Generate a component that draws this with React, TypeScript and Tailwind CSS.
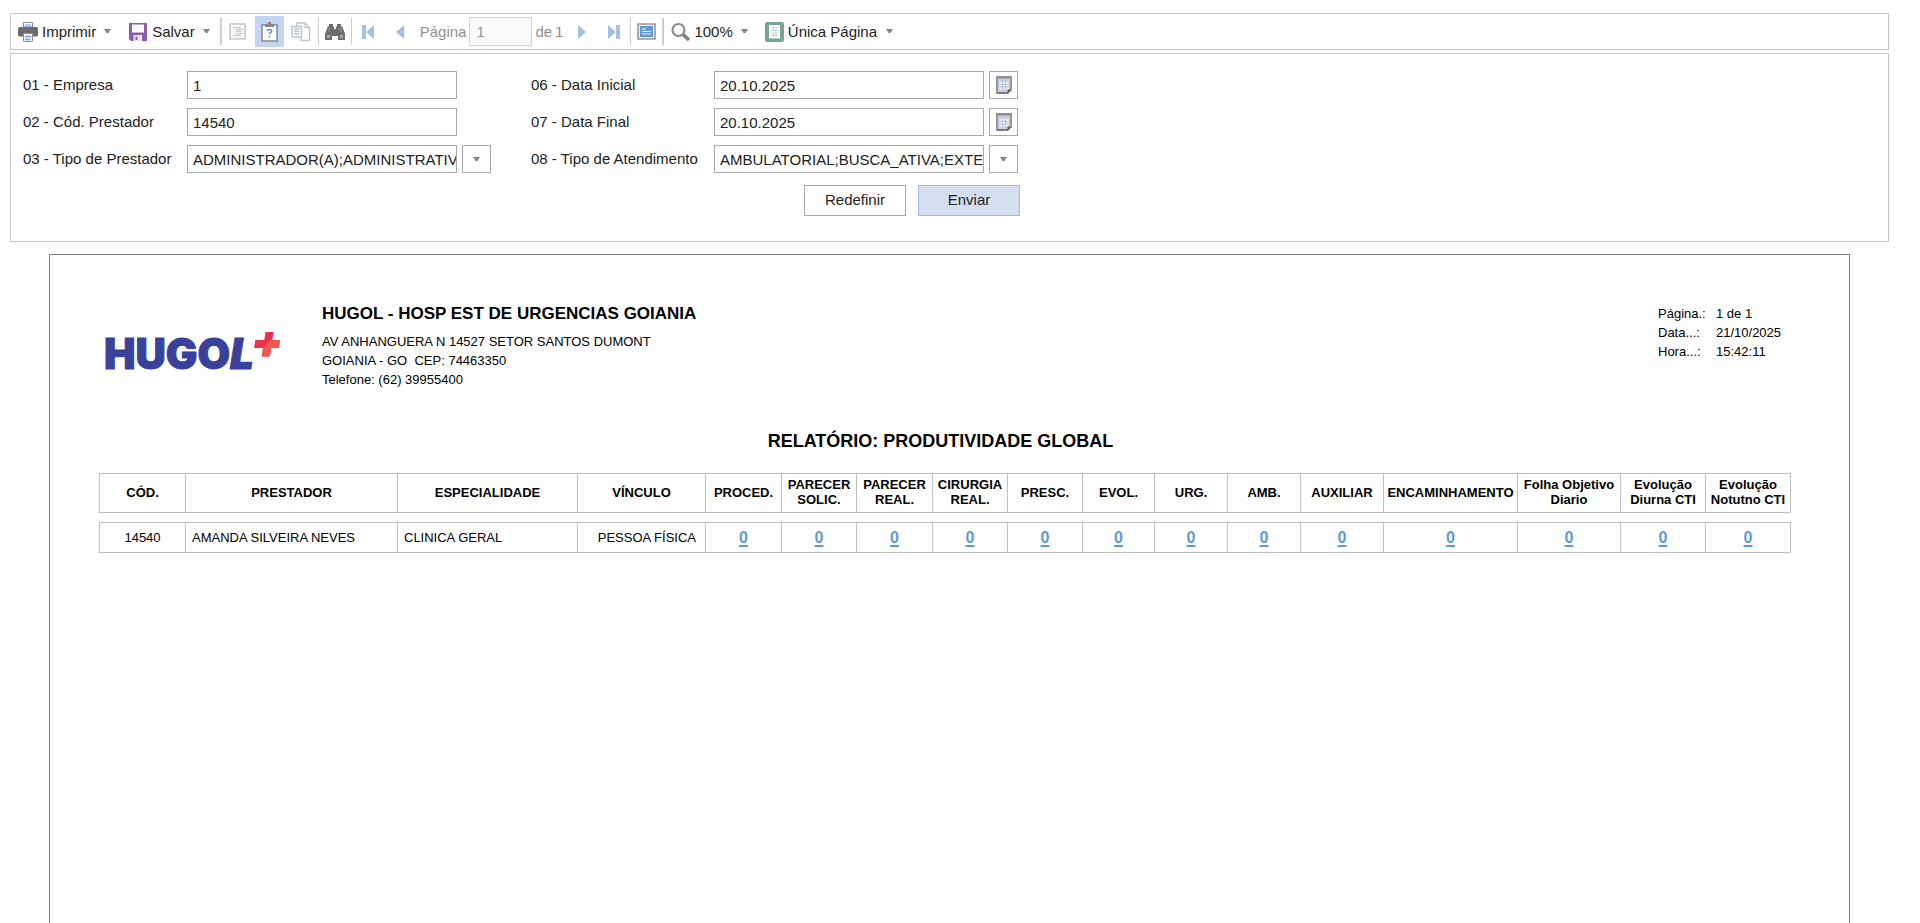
import React from "react";

const Caret = () => (
  <svg width="8" height="5" viewBox="0 0 8 5" aria-hidden="true" className="shrink-0">
    <path d="M0 0h7L4.5 4h-2z" fill="#868686" />
  </svg>
);

const PrinterIcon = () => (
  <svg width="20" height="20" viewBox="0 0 20 20" aria-hidden="true">
    <path d="M5.5 5.5v-5h9v5" fill="#fff" stroke="#8a8a8a" />
    <path d="M7 3h6" stroke="#6b9bd1" />
    <path d="M2 5h16q2 0 2 2v6q0 1.500-2 1.500H2q-2 0-2-1.500V7q0-2 2-2z" fill="#6b6b6b" />
    <path d="M5 5h10" stroke="#4f87c6" strokeWidth="1.200" />
    <path d="M5.500 11.500h9v8h-9z" fill="#eef4fb" stroke="#929292" />
    <path d="M7 14.500h6M7 17.500h5" stroke="#6ea3dc" strokeWidth="1.500" />
  </svg>
);

const SaveIcon = () => (
  <svg width="18" height="18" viewBox="0 0 18 18" aria-hidden="true">
    <path d="M0 0h18v18H2l-2-2z" fill="#8d5bb0" />
    <path d="M3 1.500h12v8H3z" fill="#fff" />
    <path d="M4.500 12h8.500v6H4.500z" fill="#efe6f5" />
    <path d="M6.500 13.500h2V17h-2z" fill="#8d5bb0" />
  </svg>
);

const TocIcon = () => (
  <svg width="17" height="17" viewBox="0 0 17 17" aria-hidden="true">
    <path d="M1 1h15v15H1z" fill="#fafafa" stroke="#c6c6c6" strokeWidth="1.600" />
    <path d="M4 4.500h8M7 6.500h7M7 8.500h5M7 10.500h7M4 12.500h8" stroke="#a5c6e8" />
  </svg>
);

const ParamsIcon = () => (
  <svg width="17" height="21" viewBox="0 0 17 21" aria-hidden="true">
    <path d="M1 4h15v16H1z" fill="#fff" stroke="#8c8c8c" strokeWidth="1.600" />
    <path d="M4 3h3V1h3v2h3v3H4z" fill="#858585" />
    <path d="M6.300 10q0-1.500 2.200-1.500t2.200 1.500q0 1-2.200 2.200v1.300M8.500 14.800v1.700" fill="none" stroke="#5b96d4" strokeWidth="1.600" />
  </svg>
);

const CopyIcon = () => (
  <svg width="20" height="20" viewBox="0 0 20 20" aria-hidden="true">
    <path d="M5.500 4V1h8.500l4.500 4.500v13h-8.500V15" fill="#fff" stroke="#c2c2c2" strokeWidth="1.400" />
    <path d="M14 1v4.500h4.500" fill="none" stroke="#c2c2c2" strokeWidth="1.200" />
    <path d="M1 4.500h9.500v10.500H1z" fill="#fff" stroke="#c2c2c2" strokeWidth="1.400" />
    <path d="M3 7h5.500M3 9.500h5.500M3 12h5.500" stroke="#a5c6e8" strokeWidth="1.300" />
  </svg>
);

const BinocularsIcon = () => (
  <svg width="20" height="18" viewBox="0 0 20 18" aria-hidden="true">
    <path d="M4 1h4v2l1 1v2h2V4l1-1V1h4v2l1.500 1 2.500 7v6h-7v-5.500h-6V17H0v-6L2.500 4 4 3z" fill="#6e6e6e" />
    <path d="M7 8h6v5H7z" fill="#6e6e6e" />
    <path d="M2 12h3v3H2zM15 12h3v3h-3z" fill="#a9a9a9" />
    <path d="M5 4.500L3.500 9M15 4.500l1.500 4.500" stroke="#a0a0a0" />
  </svg>
);

const FirstIcon = () => (
  <svg width="12" height="16" viewBox="0 0 12 16" aria-hidden="true">
    <path d="M0 1h4v14H0zM12 1v14L4 8z" fill="#a3c1df" />
  </svg>
);
const LastIcon = () => (
  <svg width="12" height="16" viewBox="0 0 12 16" aria-hidden="true">
    <path d="M8 1h4v14H8zM0 1v14l8-7z" fill="#a3c1df" />
  </svg>
);
const PrevIcon = () => (
  <svg width="8" height="16" viewBox="0 0 8 16" aria-hidden="true">
    <path d="M8 1v14L0 8z" fill="#a3c1df" />
  </svg>
);
const NextIcon = () => (
  <svg width="8" height="16" viewBox="0 0 8 16" aria-hidden="true">
    <path d="M0 1v14l8-7z" fill="#a3c1df" />
  </svg>
);

const FullScreenIcon = () => (
  <svg width="19" height="17" viewBox="0 0 19 17" aria-hidden="true">
    <path d="M1 1h17v15H1z" fill="#e9e9e9" stroke="#999" strokeWidth="1.600" />
    <path d="M3 3h13v11H3z" fill="#609bd8" />
    <path d="M5 6h4M5 8.500h9M5 11h9" stroke="#e2eefa" strokeWidth="1.200" />
  </svg>
);

const ZoomIcon = () => (
  <svg width="20" height="20" viewBox="0 0 20 20" aria-hidden="true">
    <circle cx="7.500" cy="8" r="6" fill="#fff" stroke="#8a8a8a" strokeWidth="2.200" />
    <path d="M12 12.500l6 5.500" stroke="#808080" strokeWidth="3.600" />
  </svg>
);

const SinglePageIcon = () => (
  <svg width="19" height="20" viewBox="0 0 19 20" aria-hidden="true">
    <rect width="19" height="20" rx="2" fill="#74a894" />
    <path d="M4 3h11v13.500H4z" fill="#fff" />
    <path d="M6.500 6h6M6.500 8.500h6M6.500 11h6M6.500 13.500h6" stroke="#a5c6e8" />
  </svg>
);

const CalendarIcon = () => (
  <svg width="16" height="18" viewBox="0 0 16 18" aria-hidden="true">
    <path d="M1 1h14v12.500L11.500 17H1z" fill="#c3d0e0" stroke="#9d9497" strokeWidth="2" />
    <path d="M1 1.500h14" stroke="#93888b" strokeWidth="2" />
    <path d="M3.500 6h9v7.500h-9z" fill="#eef2f7" />
    <path d="M3.500 8.500h9M3.500 11h9M6.500 6v7.500M9.500 6v7.500" stroke="#b5c3d5" />
    <path d="M1 17h11" stroke="#857a7d" strokeWidth="2" />
    <path d="M11.500 13.500H16L11.500 18z" fill="#6f6468" />
  </svg>
);

const Logo = () => (
  <svg width="190" height="60" viewBox="-4 -6 190 60" role="img" aria-label="HUGOL">
    <text x="-1" y="37" fill="#38429a" stroke="#38429a" strokeWidth="1" className="font-['Inter',sans-serif] text-[42px] font-black">
      HUGO<tspan className="italic">L</tspan>
    </text>
    <path d="M160.500 0h8l-1.200 8H175l-1.200 8h-7.700l-1.400 8.500h-8l1.400-8.500h-9l1.200-8h9z" fill="#ee2f4c" />
    <path d="M165 8h10l-1.200 8h-7.700l-1.400 8.500h-8l1.400-8.500z" fill="#f2564e" />
  </svg>
);

const Separator = ({ wide = false }: { wide?: boolean }) => (
  <span className={wide ? "h-[27px] w-0.5 shrink-0 bg-[#cfcfcf]" : "h-[27px] w-px shrink-0 bg-[#cfcfcf]"} />
);

function Toolbar() {
  return (
    <header className="flex h-[37px] items-center border border-[#c6c6c6] pl-[7px]">
      <button type="button" className="flex items-center gap-1">
        <PrinterIcon />
        <span className="pt-0.5">Imprimir</span>
        <span className="ml-1"><Caret /></span>
      </button>
      <button type="button" className="ml-[17px] flex items-center gap-[5px]">
        <SaveIcon />
        <span className="pt-0.5">Salvar</span>
        <span className="ml-[3px]"><Caret /></span>
      </button>
      <span className="w-[9px]" />
      <Separator wide />
      <button type="button" aria-label="Índice" className="ml-[7px] flex"><TocIcon /></button>
      <button type="button" aria-label="Parâmetros" className="ml-[9px] flex h-[31px] w-[29px] items-center justify-center bg-[#c2d5f2]">
        <ParamsIcon />
      </button>
      <button type="button" aria-label="Copiar" className="mx-[7px] flex"><CopyIcon /></button>
      <Separator />
      <button type="button" aria-label="Localizar" className="mx-[6px] flex"><BinocularsIcon /></button>
      <Separator />
      <button type="button" aria-label="Primeira página" className="ml-[10px] flex"><FirstIcon /></button>
      <button type="button" aria-label="Página anterior" className="ml-[22px] flex"><PrevIcon /></button>
      <label htmlFor="page" className="ml-4 pt-px text-[#8f8f8f]">Página</label>
      <input id="page" defaultValue="1" className="ml-[3px] h-[29px] w-[63px] border border-[#d3d3d3] bg-[#faf9fc] px-1.5 text-[#8f8f8f] outline-none" />
      <span className="ml-[3px] pt-px text-[#8f8f8f]">de</span>
      <span className="ml-[3px] pt-px text-[#8f8f8f]">1</span>
      <button type="button" aria-label="Próxima página" className="ml-[15px] flex"><NextIcon /></button>
      <button type="button" aria-label="Última página" className="mr-[10px] ml-[22px] flex"><LastIcon /></button>
      <Separator />
      <button type="button" aria-label="Tela cheia" className="mx-[6px] flex"><FullScreenIcon /></button>
      <Separator wide />
      <button type="button" className="ml-[7px] flex items-center gap-[3px]">
        <ZoomIcon />
        <span className="pt-0.5">100%</span>
        <span className="ml-[5px]"><Caret /></span>
      </button>
      <button type="button" className="ml-4 flex items-center gap-1">
        <SinglePageIcon />
        <span className="pt-0.5">Única Página</span>
        <span className="ml-[5px]"><Caret /></span>
      </button>
    </header>
  );
}

type FieldProps = { id: string; label: string; value: string; extra?: "list" | "date" };

function Field({ id, label, value, extra }: FieldProps) {
  return (
    <>
      <label htmlFor={id} className="whitespace-nowrap">{label}</label>
      <div className="flex gap-[5px]">
        <input id={id} defaultValue={value} className="h-7 w-[270px] border border-[#a9a9a9] bg-white pl-[5px] outline-none" />
        {extra && (
          <button
            type="button"
            aria-label={extra === "date" ? "Abrir calendário" : "Abrir lista"}
            className="flex h-7 w-[29px] items-center justify-center border border-[#a9a9a9]"
          >
            {extra === "date" ? <CalendarIcon /> : <Caret />}
          </button>
        )}
      </div>
    </>
  );
}

function Parameters() {
  return (
    <form className="mt-[3px] h-[189px] border border-[#c6c6c6] px-3 pt-[17px]" onSubmit={(e) => e.preventDefault()}>
      <div className="inline-flex flex-col items-end">
        <div className="flex gap-10">
          <div className="grid grid-cols-[164px_304px] content-start items-center gap-y-[9px]">
            <Field id="f1" label="01 - Empresa" value="1" />
            <Field id="f2" label="02 - Cód. Prestador" value="14540" />
            <Field id="f3" label="03 - Tipo de Prestador" value="ADMINISTRADOR(A);ADMINISTRATIVO(A);ANALISTA" extra="list" />
          </div>
          <div className="grid grid-cols-[183px_306px] content-start items-center gap-y-[9px]">
            <Field id="f6" label="06 - Data Inicial" value="20.10.2025" extra="date" />
            <Field id="f7" label="07 - Data Final" value="20.10.2025" extra="date" />
            <Field id="f8" label="08 - Tipo de Atendimento" value="AMBULATORIAL;BUSCA_ATIVA;EXTERNO;INTERNADO" extra="list" />
          </div>
        </div>
        <div className="mt-3 flex gap-3">
          <button type="reset" className="h-[31px] w-[102px] border border-[#a9a9a9] bg-white">Redefinir</button>
          <button type="submit" className="h-[31px] w-[102px] border border-[#a2bade] bg-[#d5dff1]">Enviar</button>
        </div>
      </div>
    </form>
  );
}

const counters: { title: string[]; width: string }[] = [
  { title: ["PROCED."], width: "w-[76px]" },
  { title: ["PARECER", "SOLIC."], width: "w-[75px]" },
  { title: ["PARECER", "REAL."], width: "w-[76px]" },
  { title: ["CIRURGIA", "REAL."], width: "w-[75px]" },
  { title: ["PRESC."], width: "w-[75px]" },
  { title: ["EVOL."], width: "w-[72px]" },
  { title: ["URG."], width: "w-[73px]" },
  { title: ["AMB."], width: "w-[73px]" },
  { title: ["AUXILIAR"], width: "w-[83px]" },
  { title: ["ENCAMINHAMENTO"], width: "w-[134px]" },
  { title: ["Folha Objetivo", "Diario"], width: "w-[103px]" },
  { title: ["Evolução", "Diurna CTI"], width: "w-[85px]" },
  { title: ["Evolução", "Notutno CTI"], width: "w-[85px]" },
];

const cell = "border border-[#bfbfbf]";
const headCell = "border border-[#bfbfbf] px-0 pt-0 pb-0.5";

function Report() {
  return (
    <main className="mx-[39px] mt-3 min-h-[669px] grow border border-b-0 border-[#808080] px-[49px] pt-[49px] text-[13px] text-black">
      <div className="flex items-start">
        <div className="mt-[22px] ml-0.5 w-[221px]"><Logo /></div>
        <div className="leading-[19px]">
          <h1 className="mb-2 text-[17px] leading-5 font-bold">HUGOL - HOSP EST DE URGENCIAS GOIANIA</h1>
          <p>AV ANHANGUERA N 14527 SETOR SANTOS DUMONT</p>
          <p className="whitespace-pre">GOIANIA - GO  CEP: 74463350</p>
          <p>Telefone: (62) 39955400</p>
        </div>
        <dl className="mr-[8px] ml-auto grid grid-cols-[58px_76px] leading-[19px]">
          <dt>Página.:</dt><dd>1 de 1</dd>
          <dt>Data...:</dt><dd>21/10/2025</dd>
          <dt>Hora...:</dt><dd>15:42:11</dd>
        </dl>
      </div>
      <h2 className="mt-10 pr-[18px] text-center text-[18px] leading-6 font-bold">RELATÓRIO: PRODUTIVIDADE GLOBAL</h2>
      <table className="mt-5 w-[1692px] table-fixed border-collapse">
        <thead>
          <tr className="h-[39px] leading-[15px]">
            <th className={`${headCell} w-[86px]`}>CÓD.</th>
            <th className={`${headCell} w-[212px]`}>PRESTADOR</th>
            <th className={`${headCell} w-[180px]`}>ESPECIALIDADE</th>
            <th className={`${headCell} w-[128px]`}>VÍNCULO</th>
            {counters.map((c, i) => (
              <th key={i} className={`${headCell} ${c.width} whitespace-nowrap`}>
                {c.title.map((line) => <span key={line} className="block">{line}</span>)}
              </th>
            ))}
          </tr>
        </thead>
        <tbody>
          <tr className="h-[10px]" aria-hidden="true"><td colSpan={17} /></tr>
          <tr className="h-[30px]">
            <td className={`${cell} text-center`}>14540</td>
            <td className={`${cell} px-[6px]`}>AMANDA SILVEIRA NEVES</td>
            <td className={`${cell} px-[6px]`}>CLINICA GERAL</td>
            <td className={`${cell} pr-[9px] text-right whitespace-nowrap`}>PESSOA FÍSICA</td>
            {counters.map((_, i) => (
              <td key={i} className={`${cell} text-center`}>
                <a href="#detalhe" className="text-[16px] font-bold text-[#5b9bd5] underline decoration-2 underline-offset-2">0</a>
              </td>
            ))}
          </tr>
        </tbody>
      </table>
    </main>
  );
}

export default function App() {
  return (
    <div className="flex min-h-screen flex-col bg-white pt-[13px] pr-[31px] pl-[10px] font-['Liberation_Sans',Arial,sans-serif] text-[15px] text-[#222]">
      <Toolbar />
      <Parameters />
      <Report />
    </div>
  );
}
